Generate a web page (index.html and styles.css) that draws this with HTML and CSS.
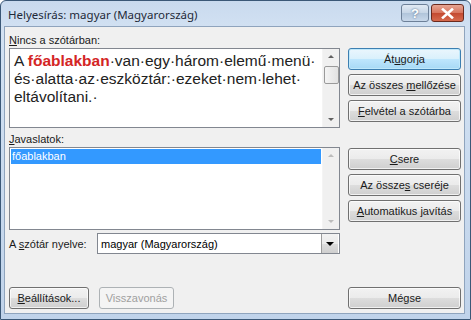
FILE: index.html
```html
<!DOCTYPE html>
<html lang="hu">
<head>
  <meta charset="UTF-8">
  <title>Helyesírás: magyar (Magyarország)</title>
  <link rel="stylesheet" href="styles.css">
</head>
<body>
  <div class="window">
    <div class="titlebar">
      <span class="title">Helyesírás: magyar (Magyarország)</span>
      <div class="caption-buttons">
        <span class="cap-btn help">?</span>
        <span class="cap-btn close">
          <svg width="13" height="11" viewBox="0 0 13 11">
            <path d="M2 1.5 L11 9.5 M11 1.5 L2 9.5" stroke="#fff" stroke-width="2.6" stroke-linecap="square"/>
          </svg>
        </span>
      </div>
    </div>

    <div class="client">
      <div class="main">
        <div class="left">
          <div class="label"><u>N</u>incs a szótárban:</div>
          <div class="textbox">
            <div class="text">
              <div>A <b class="error">főablakban</b>·van·egy·három·elemű·menü·</div>
              <div>és·alatta·az·eszköztár:·ezeket·nem·lehet·</div>
              <div>eltávolítani.·</div>
            </div>
            <div class="scrollbar">
              <span class="arrow up"></span>
              <span class="thumb"></span>
              <span class="track"></span>
              <span class="arrow down"></span>
            </div>
          </div>

          <div class="label"><u>J</u>avaslatok:</div>
          <div class="listbox">
            <div class="items">
              <div class="item selected">főablakban</div>
            </div>
            <div class="scrollbar disabled">
              <span class="arrow up"></span>
              <span class="track"></span>
              <span class="arrow down"></span>
            </div>
          </div>

          <div class="lang-row">
            <span class="lang-label">A <u>s</u>zótár nyelve:</span>
            <div class="combo">
              <span class="combo-value">magyar (Magyarország)</span>
              <span class="combo-btn"><span class="arrow down dark"></span></span>
            </div>
          </div>
        </div>

        <div class="right">
          <div class="btn-group">
            <div class="btn default">Át<u>u</u>gorja</div>
            <div class="btn">Az összes <u>m</u>ellőzése</div>
            <div class="btn"><u>F</u>elvétel a szótárba</div>
          </div>
          <div class="btn-group">
            <div class="btn"><u>C</u>sere</div>
            <div class="btn">Az össze<u>s</u> cseréje</div>
            <div class="btn"><u>A</u>utomatikus javítás</div>
          </div>
        </div>
      </div>

      <div class="footer">
        <div class="footer-left">
          <div class="btn small"><u>B</u>eállítások...</div>
          <div class="btn small disabled">Visszavonás</div>
        </div>
        <div class="btn">Mégse</div>
      </div>
    </div>
  </div>
</body>
</html>
```

FILE: styles.css
```css
* {
  margin: 0;
  padding: 0;
  box-sizing: border-box;
}

body {
  width: 471px;
  height: 320px;
  overflow: hidden;
  font-family: "Liberation Sans", Arial, sans-serif;
  font-size: 11px;
  color: #000;
}

u {
  text-decoration: underline;
  text-underline-offset: 1px;
}

.window {
  width: 471px;
  height: 320px;
  border: 1px solid #3b5877;
  border-radius: 6px 6px 0 0;
  background: linear-gradient(180deg, #c9daee 0%, #d3e2f3 10%, #c0d3ea 100%);
  display: flex;
  flex-direction: column;
  padding: 0 5px 5px 3px;
}

.titlebar {
  height: 25px;
  display: flex;
  align-items: flex-start;
  justify-content: space-between;
}

.title {
  font-family: "Noto Sans", sans-serif;
  font-size: 11.5px;
  color: #1e2a38;
  padding: 6px 0 0 4px;
}

.caption-buttons {
  display: flex;
  gap: 2px;
  margin-top: 3px;
  margin-right: 1px;
}

.cap-btn {
  height: 18px;
  display: flex;
  align-items: center;
  justify-content: center;
  border: 1px solid #6d8098;
  border-radius: 3px;
}

.cap-btn.help {
  width: 28px;
  background: linear-gradient(180deg, #e2eaf4 0%, #c6d5e6 50%, #b0c4da 51%, #c8d8ea 100%);
  color: #fff;
  font-weight: bold;
  font-size: 13px;
  text-shadow: 0 0 2px #3c5a7c;
}

.cap-btn.close {
  width: 33px;
  border-color: #6b2a1e;
  background: linear-gradient(180deg, #e7a593 0%, #d8765f 48%, #c44a31 52%, #d66a4e 100%);
}

.client {
  flex: 1;
  background: #f0f0f0;
  border: 1px solid #8fa4bd;
  display: flex;
  flex-direction: column;
  padding: 4px 3px 4px 4px;
}

.main {
  display: flex;
  gap: 8px;
}

.left {
  width: 333px;
  display: flex;
  flex-direction: column;
}

.label {
  height: 16px;
  line-height: 16px;
  color: #1a1a1a;
}

.label:first-child {
  margin-top: 1px;
}

.textbox {
  height: 80px;
  border: 1px solid #828790;
  background: #fff;
  display: flex;
  margin-bottom: 3px;
}

.text {
  flex: 1;
  font-family: "Liberation Sans", Arial, sans-serif;
  font-size: 15.5px;
  line-height: 18px;
  color: #222;
  white-space: nowrap;
  overflow: hidden;
  padding: 3px 4px 0 4px;
}

.error {
  color: #d42525;
}

.scrollbar {
  width: 17px;
  display: flex;
  flex-direction: column;
  align-items: center;
  background: #f0f0f0;
  border-left: 1px solid #f4f4f4;
}

.scrollbar .track {
  flex: 1;
}

.scrollbar .thumb {
  width: 15px;
  height: 18px;
  margin-top: 2px;
  border: 1px solid #9a9a9a;
  border-radius: 2px;
  background: linear-gradient(90deg, #f4f4f4, #e2e2e2);
}

.arrow {
  width: 0;
  height: 0;
  border-left: 3px solid transparent;
  border-right: 3px solid transparent;
  margin: 6px 0;
}

.arrow.up {
  border-bottom: 3px solid #616161;
}

.arrow.down {
  border-top: 3px solid #616161;
}

.scrollbar.disabled .arrow.up {
  border-bottom-color: #bcbcbc;
}

.scrollbar.disabled .arrow.down {
  border-top-color: #bcbcbc;
}

.listbox {
  height: 83px;
  border: 1px solid #828790;
  background: #fff;
  display: flex;
}

.items {
  flex: 1;
  padding: 1px;
}

.item {
  height: 15px;
  line-height: 15px;
  padding-left: 1px;
}

.item.selected {
  background: #3399ff;
  color: #fff;
}

.lang-row {
  display: flex;
  align-items: center;
  margin-top: 3px;
}

.lang-label {
  width: 88px;
  color: #1a1a1a;
}

.combo {
  width: 243px;
  height: 21px;
  border: 1px solid #828790;
  background: #fff;
  display: flex;
  align-items: center;
}

.combo-value {
  flex: 1;
  padding-left: 3px;
}

.combo-btn {
  width: 17px;
  height: 19px;
  margin-right: 1px;
  border-left: 1px solid #9c9c9c;
  background: linear-gradient(180deg, #f2f2f2 0%, #ebebeb 50%, #dddddd 51%, #cfcfcf 100%);
  display: flex;
  align-items: center;
  justify-content: center;
}

.arrow.down.dark {
  border-left-width: 4px;
  border-right-width: 4px;
  border-top: 4px solid #000;
  margin: 0;
}

.right {
  width: 113px;
  display: flex;
  flex-direction: column;
  gap: 26px;
  padding-top: 17px;
}

.btn-group {
  display: flex;
  flex-direction: column;
  gap: 4px;
}

.btn {
  width: 113px;
  height: 22px;
  line-height: 20px;
  text-align: center;
  white-space: nowrap;
  color: #1a1a1a;
  border: 1px solid #707070;
  border-radius: 3px;
  background: linear-gradient(180deg, #f2f2f2 0%, #ebebeb 50%, #dddddd 51%, #cfcfcf 100%);
  box-shadow: inset 0 0 0 1px rgba(255, 255, 255, 0.7);
}

.btn.default {
  border-color: #3c7fb1;
  background: linear-gradient(180deg, #eaf6fd 0%, #d9f0fc 50%, #bee6fd 51%, #a7d9f5 100%);
  box-shadow: inset 0 0 0 1px #bfe8fb;
}

.btn.small {
  width: 80px;
}

.btn.disabled {
  width: 75px;
  color: #a0a0a0;
  border-color: #adb2b5;
  background: #f4f4f4;
  box-shadow: none;
}

.footer {
  margin-top: auto;
  display: flex;
  justify-content: space-between;
  align-items: flex-end;
}

.footer-left {
  display: flex;
  gap: 10px;
}
```
